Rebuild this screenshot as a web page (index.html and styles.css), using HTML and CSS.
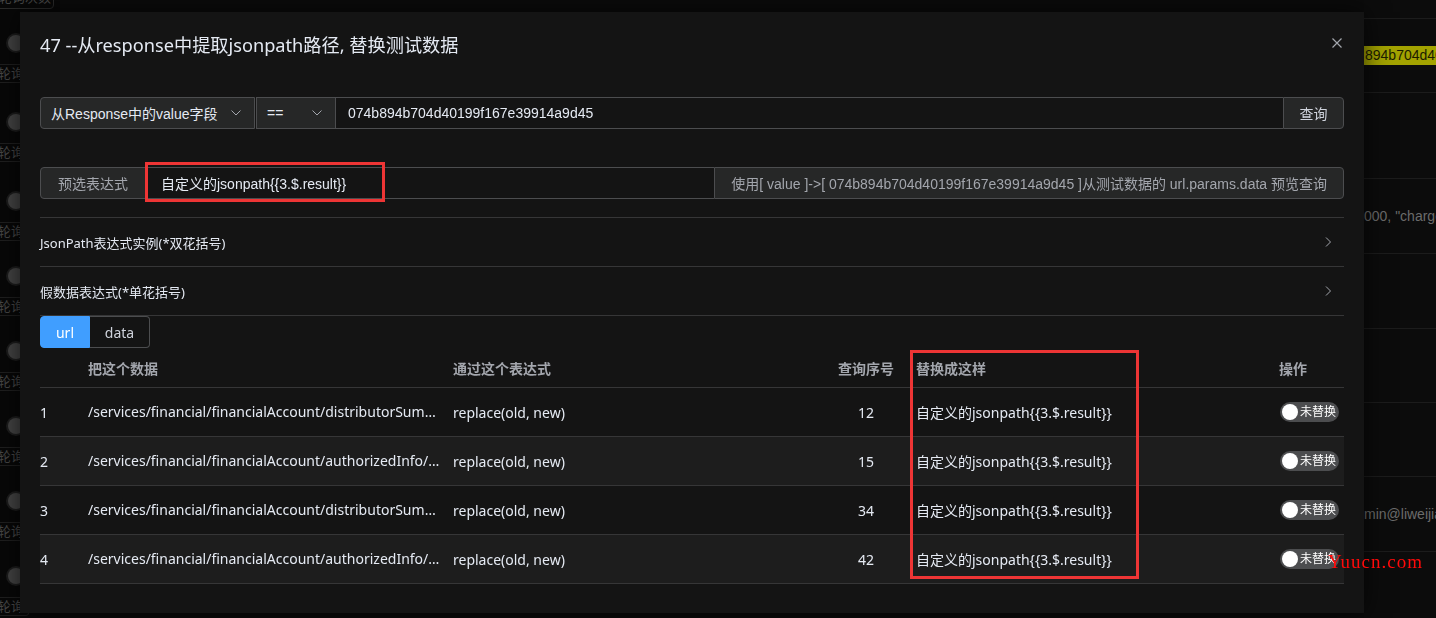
FILE: index.html
```html
<!DOCTYPE html>
<html lang="zh-CN">
<head>
<meta charset="utf-8">
<title>jsonpath</title>
<link rel="stylesheet" href="styles.css">
</head>
<body>
<div class="page">
  <div class="bg-left">
    <div class="bg-top-tag">轮询次数</div>
    <div class="bg-lrow tall"><span class="bg-toggle"></span><span class="bg-tag">轮询</span></div>
    <div class="bg-lrow tall"><span class="bg-toggle"></span><span class="bg-tag">轮询</span></div>
    <div class="bg-lrow"><span class="bg-toggle"></span><span class="bg-tag">轮询</span></div>
    <div class="bg-lrow"><span class="bg-toggle"></span><span class="bg-tag">轮询</span></div>
    <div class="bg-lrow"><span class="bg-toggle"></span><span class="bg-tag">轮询</span></div>
    <div class="bg-lrow"><span class="bg-toggle"></span><span class="bg-tag">轮询</span></div>
    <div class="bg-lrow"><span class="bg-toggle"></span><span class="bg-tag">轮询</span></div>
    <div class="bg-lrow"><span class="bg-toggle"></span><span class="bg-tag">轮询</span></div>
  </div>
  <div class="bg-right">
    <div class="bg-r0"></div>
    <div class="bg-rrow h73"><span class="hl">894b704d40199f</span></div>
    <div class="bg-rrow h85"></div>
    <div class="bg-rrow h74"><span class="cut">000, "charge": 1</span></div>
    <div class="bg-rrow h74"></div>
    <div class="bg-rrow h73"></div>
    <div class="bg-rrow h73"></div>
    <div class="bg-rrow h74"><span class="cut">min@liweijia.com</span></div>
    <div class="bg-rrow grow"></div>
  </div>
</div>

<div class="dialog">
  <div class="dlg-head">
    <div class="dlg-title">47 --从response中提取jsonpath路径, 替换测试数据</div>
    <svg class="close" width="10" height="10" viewBox="0 0 10 10"><path d="M0.5 0.5L9.5 9.5M9.5 0.5L0.5 9.5" stroke="#a3a6ad" stroke-width="1.2" fill="none"/></svg>
  </div>
  <div class="dlg-body">
    <div class="query-row">
      <div class="sel sel1"><span>从Response中的value字段</span><svg width="10" height="6" viewBox="0 0 10 6"><path d="M0.5 0.5L5 5L9.5 0.5" stroke="#a3a6ad" stroke-width="1" fill="none"/></svg></div>
      <div class="sel sel2"><span>==</span><svg width="10" height="6" viewBox="0 0 10 6"><path d="M0.5 0.5L5 5L9.5 0.5" stroke="#a3a6ad" stroke-width="1" fill="none"/></svg></div>
      <div class="qinput">074b894b704d40199f167e39914a9d45</div>
      <div class="qbtn">查询</div>
    </div>

    <div class="expr-row">
      <div class="prepend">预选表达式</div>
      <div class="einput">自定义的jsonpath{{3.$.result}}<span class="anno anno-input"></span></div>
      <div class="append">使用[ value ]-&gt;[ 074b894b704d40199f167e39914a9d45 ]从测试数据的 url.params.data 预览查询</div>
    </div>

    <div class="collapse">
      <div class="citem"><span>JsonPath表达式实例(*双花括号)</span><svg width="7" height="10" viewBox="0 0 7 10"><path d="M1 0.5L5.5 5L1 9.5" stroke="#a3a6ad" stroke-width="1" fill="none"/></svg></div>
      <div class="citem"><span>假数据表达式(*单花括号)</span><svg width="7" height="10" viewBox="0 0 7 10"><path d="M1 0.5L5.5 5L1 9.5" stroke="#a3a6ad" stroke-width="1" fill="none"/></svg></div>
    </div>

    <div class="tabs">
      <div class="tab active">url</div>
      <div class="tab">data</div>
    </div>

    <div class="table">
      <div class="trow thead">
        <div class="c"></div>
        <div class="c">把这个数据</div>
        <div class="c">通过这个表达式</div>
        <div class="c center">查询序号</div>
        <div class="c">替换成这样</div>
        <div class="c">操作</div>
      </div>
      <div class="trow">
        <div class="c">1</div>
        <div class="c path">/services/financial/financialAccount/distributorSummary/list</div>
        <div class="c">replace(old, new)</div>
        <div class="c center">12</div>
        <div class="c">自定义的jsonpath{{3.$.result}}</div>
        <div class="c"><span class="switch"><span class="knob"></span><span class="stext">未替换</span></span></div>
      </div>
      <div class="trow striped">
        <div class="c">2</div>
        <div class="c path">/services/financial/financialAccount/authorizedInfo/getDetail</div>
        <div class="c">replace(old, new)</div>
        <div class="c center">15</div>
        <div class="c">自定义的jsonpath{{3.$.result}}</div>
        <div class="c"><span class="switch"><span class="knob"></span><span class="stext">未替换</span></span></div>
      </div>
      <div class="trow">
        <div class="c">3</div>
        <div class="c path">/services/financial/financialAccount/distributorSummary/list</div>
        <div class="c">replace(old, new)</div>
        <div class="c center">34</div>
        <div class="c">自定义的jsonpath{{3.$.result}}</div>
        <div class="c"><span class="switch"><span class="knob"></span><span class="stext">未替换</span></span></div>
      </div>
      <div class="trow striped">
        <div class="c">4</div>
        <div class="c path">/services/financial/financialAccount/authorizedInfo/getDetail</div>
        <div class="c">replace(old, new)</div>
        <div class="c center">42</div>
        <div class="c">自定义的jsonpath{{3.$.result}}</div>
        <div class="c"><span class="switch"><span class="knob"></span><span class="stext">未替换</span></span></div>
      </div>
      <span class="anno anno-table"></span>
    </div>
  </div>
</div>

<div class="watermark">Yuucn.com</div>
</body>
</html>
```

FILE: styles.css
```css
* { box-sizing: border-box; }

html, body {
  margin: 0;
  height: 618px;
  overflow: hidden;
  background: #0b0b0b;
  font-family: "Liberation Sans", "Noto Sans CJK SC", sans-serif;
}

/* ---------- background page (under the dialog) ---------- */
.page {
  display: flex;
  justify-content: space-between;
  height: 618px;
}

.bg-left {
  width: 60px;
  overflow: hidden;
  background: #080808;
}

.bg-top-tag {
  height: 22px;
  width: 62px;
  margin-top: -13px;
  margin-left: -8px;
  border: 1px solid #2a2a2a;
  border-radius: 4px;
  font-size: 13px;
  line-height: 20px;
  color: #474747;
  padding-left: 6px;
  white-space: nowrap;
}

.bg-lrow {
  height: 75px;
  display: flex;
  flex-direction: column;
  align-items: flex-start;
  padding-top: 26px;
}
.bg-lrow.tall { height: 79px; }

.bg-toggle {
  width: 16px;
  height: 16px;
  margin-left: 8px;
  border-radius: 50%;
  background: #444;
  box-shadow: 0 0 0 2px #1d1d1d;
}

.bg-tag {
  margin-top: 13px;
  margin-left: -7px;
  height: 19px;
  padding: 0 4px;
  border: 1px solid #1f1f1f;
  border-radius: 3px;
  font-size: 13px;
  line-height: 17px;
  color: #464646;
  white-space: nowrap;
}

.bg-right {
  width: 72px;
  overflow: hidden;
  display: flex;
  flex-direction: column;
  background: #0c0c0c;
}
.bg-r0 { height: 18px; flex: none; }
.bg-rrow {
  flex: none;
  border-top: 1px solid #1c1c1c;
  display: flex;
  align-items: center;
  white-space: nowrap;
  font-size: 14px;
  color: #6b6b6b;
}
.bg-rrow.h73 { height: 74px; }
.bg-rrow.h74 { height: 75px; }
.bg-rrow.h85 { height: 86px; }
.bg-rrow.grow { flex: 1; }

.hl {
  display: block;
  width: 100%;
  padding-left: 1px;
  background: #a3a300;
  color: #1c1c00;
  line-height: 19px;
  overflow: hidden;
}

/* ---------- dialog ---------- */
.dialog {
  position: fixed;
  left: 20px;
  top: 12px;
  width: 1344px;
  height: 601px;
  background: #141414;
  padding: 20px 20px 0;
  box-shadow: 0 0 24px rgba(0, 0, 0, 0.7);
}

.dlg-head {
  display: flex;
  justify-content: space-between;
  align-items: flex-start;
  height: 26px;
}
.dlg-title {
  font-family: "Noto Sans", "Noto Sans CJK SC", sans-serif;
  font-size: 18.2px;
  line-height: 26px;
  color: #e5eaf3;
  white-space: nowrap;
}
.close {
  margin-top: 6px;
  margin-right: 2px;
}

.dlg-body {
  padding-top: 39px;
  font-size: 14px;
}

/* query row */
.query-row {
  display: flex;
  height: 32px;
}
.sel {
  display: flex;
  align-items: center;
  justify-content: space-between;
  height: 32px;
  padding: 0 13px 0 10px;
  background: #262727;
  border: 1px solid #4c4d4f;
  color: #e5eaf3;
  white-space: nowrap;
}
.sel1 {
  width: 215px;
  border-radius: 4px 0 0 4px;
}
.sel2 {
  width: 80px;
  margin-left: 1px;
  padding-right: 13px;
}
.qinput {
  flex: 1;
  display: flex;
  align-items: center;
  padding: 0 12px;
  border-top: 1px solid #4c4d4f;
  border-bottom: 1px solid #4c4d4f;
  color: #e5eaf3;
}
.qbtn {
  width: 61px;
  display: flex;
  align-items: center;
  justify-content: center;
  background: #262727;
  border: 1px solid #4c4d4f;
  border-radius: 0 4px 4px 0;
  color: #cfd3dc;
}

/* expression row */
.expr-row {
  display: flex;
  height: 32px;
  margin-top: 38px;
  white-space: nowrap;
}
.prepend {
  display: flex;
  align-items: center;
  padding: 0 17px;
  background: #262727;
  border: 1px solid #4c4d4f;
  border-radius: 4px 0 0 4px;
  color: #a3a6ad;
}
.einput {
  position: relative;
  flex: 1;
  display: flex;
  align-items: center;
  padding: 0 15px;
  border-top: 1px solid #4c4d4f;
  border-bottom: 1px solid #4c4d4f;
  color: #e5eaf3;
}
.append {
  display: flex;
  align-items: center;
  padding: 0 16px;
  background: #262727;
  border: 1px solid #4c4d4f;
  border-radius: 0 4px 4px 0;
  color: #a3a6ad;
}

/* annotation boxes */
.anno {
  position: absolute;
  border: 3px solid #ee3535;
  pointer-events: none;
}
.anno-input {
  left: -1px;
  top: -6px;
  width: 240px;
  height: 40px;
}
.anno-table {
  left: 870px;
  top: 2px;
  width: 229px;
  height: 229px;
}

/* collapse */
.collapse {
  margin-top: 18px;
  border-top: 1px solid #363637;
  font-family: "Noto Sans", "Noto Sans CJK SC", sans-serif;
}
.citem {
  height: 49px;
  display: flex;
  align-items: center;
  justify-content: space-between;
  padding-right: 12px;
  border-bottom: 1px solid #363637;
  font-size: 13px;
  color: #e5eaf3;
}

/* tabs */
.tabs {
  display: flex;
  height: 32px;
  font-family: "Noto Sans", "Noto Sans CJK SC", sans-serif;
}
.tab {
  display: flex;
  align-items: center;
  justify-content: center;
  width: 60px;
  border: 1px solid #4c4d4f;
  border-left: none;
  border-radius: 0 4px 4px 0;
  color: #cfd3dc;
}
.tab.active {
  width: 50px;
  background: #409eff;
  border: 1px solid #409eff;
  border-radius: 4px 0 0 4px;
  color: #fff;
}

/* table */
.table {
  position: relative;
  font-family: "Noto Sans", "Noto Sans CJK SC", sans-serif;
}
.trow {
  display: grid;
  grid-template-columns: 48px 365px 363px 100px 363px 65px;
  height: 49px;
  border-bottom: 1px solid #363637;
  color: #e5eaf3;
}
.trow.thead {
  height: 40px;
  color: #a3a6ad;
  font-weight: bold;
}
.trow.striped { background: #1d1d1d; }
.c {
  display: flex;
  align-items: center;
  white-space: nowrap;
  min-width: 0;
}
.c.center { justify-content: center; }
.c.path {
  display: block;
  line-height: 48px;
  overflow: hidden;
  text-overflow: ellipsis;
  padding-right: 8px;
}

.switch {
  display: flex;
  align-items: center;
  width: 59px;
  height: 20px;
  margin-left: 1px;
  padding-left: 2px;
  border-radius: 10px;
  background: #4c4d4f;
}
.knob {
  width: 16px;
  height: 16px;
  border-radius: 50%;
  background: #fff;
}
.stext {
  margin-left: 2px;
  font-size: 12px;
  line-height: 20px;
  color: #fff;
}

/* watermark */
.watermark {
  position: fixed;
  left: 1328px;
  top: 551px;
  font-family: "Liberation Serif", serif;
  font-size: 19px;
  letter-spacing: 1px;
  line-height: 22px;
  color: #ff0a0a;
}
```
